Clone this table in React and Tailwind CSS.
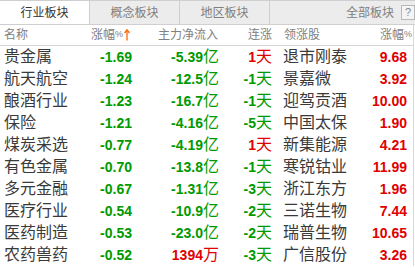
import React from "react";

const rows = [
  ["贵金属", "-1.69", "-5.39", "亿", "g", "1", "r", "退市刚泰", "9.68"],
  ["航天航空", "-1.24", "-12.5", "亿", "g", "-1", "g", "景嘉微", "3.92"],
  ["酿酒行业", "-1.23", "-16.7", "亿", "g", "-1", "g", "迎驾贡酒", "10.00"],
  ["保险", "-1.21", "-4.16", "亿", "g", "-5", "g", "中国太保", "1.90"],
  ["煤炭采选", "-0.77", "-4.19", "亿", "g", "1", "r", "新集能源", "4.21"],
  ["有色金属", "-0.70", "-13.8", "亿", "g", "-1", "g", "寒锐钴业", "11.99"],
  ["多元金融", "-0.67", "-1.31", "亿", "g", "-3", "g", "浙江东方", "1.96"],
  ["医疗行业", "-0.54", "-10.9", "亿", "g", "-2", "g", "三诺生物", "7.44"],
  ["医药制造", "-0.53", "-23.0", "亿", "g", "-2", "g", "瑞普生物", "10.65"],
  ["农药兽药", "-0.52", "1394", "万", "r", "-3", "g", "广信股份", "3.26"],
];

const FONT = { fontFamily: '"Liberation Sans", "Noto Sans CJK SC", sans-serif' };

export default function App() {
  return (
    <div className="w-[415px] h-[268px] bg-white overflow-hidden text-[#333]" style={FONT}>
      {/* Tabs */}
      <div className="flex h-[25px] border-t border-b border-[#cfcfcf] bg-[#ececec] text-[12px]">
        <div className="w-[90px] flex items-center justify-center bg-white text-[#333] border-r border-[#cfcfcf]">行业板块</div>
        <div className="w-[90px] flex items-center justify-center text-[#808080] border-r border-[#cfcfcf]">概念板块</div>
        <div className="w-[90px] flex items-center justify-center text-[#808080] border-r border-[#cfcfcf]">地区板块</div>
        <div className="flex-1 flex items-center justify-end text-[#808080]">
          <span>全部板块</span>
          <span className="ml-[7px] w-[14px] h-[15px] border border-[#b8b8b8] bg-[#f4f4f4] flex items-center justify-center text-[11px] text-[#888] leading-none">?</span>
        </div>
      </div>
      <div className="border-r border-[#d8d8d8] w-[414px]">
        {/* Header */}
        <div className="flex h-[21px] items-center border-b border-[#d6d6d6] text-[12px] text-[#808080]">
          <div className="w-[90px] pl-[4px]">名称</div>
          <div className="w-[42px] flex justify-end items-center pr-[2px]">
            <span>涨幅</span>
            <span className="text-[9px]">%</span>
            <svg width="6" height="12" viewBox="0 0 6 12" className="ml-[1px]">
              <path d="M3 1 L3 11.5" stroke="#ff6600" strokeWidth="1.3" />
              <path d="M0.5 4 L3 0.8 L5.5 4" stroke="#ff6600" strokeWidth="1.3" fill="none" />
            </svg>
          </div>
          <div className="w-[86px] text-right">主力净流入</div>
          <div className="w-[54px] text-right">连涨</div>
          <div className="w-[106px] pl-[12px]">领涨股</div>
          <div className="flex-1 flex justify-end items-center pr-[1px]">
            <span>涨幅</span>
            <span className="text-[9px]">%</span>
          </div>
        </div>
        {/* Rows */}
        {rows.map((r, i) => {
          const c3 = r[4] === "r" ? "text-[#e00000]" : "text-[#009a00]";
          const c4 = r[6] === "r" ? "text-[#e00000]" : "text-[#009a00]";
          return (
            <div key={i} className="flex h-[22px] items-center">
              <div className="w-[90px] pl-[4px] text-[16px] text-[#3a3a3a]">{r[0]}</div>
              <div className="w-[42px] text-right text-[14px] font-bold text-[#009a00]">{r[1]}</div>
              <div className={`w-[87px] text-right ${c3}`}>
                <span className="text-[14px] font-bold">{r[2]}</span>
                <span className="text-[16px]">{r[3]}</span>
              </div>
              <div className={`w-[53px] text-right ${c4}`}>
                <span className="text-[14px] font-bold">{r[5]}</span>
                <span className="text-[16px]">天</span>
              </div>
              <div className="w-[90px] pl-[11px] text-[16px] text-[#3a3a3a]">{r[7]}</div>
              <div className="w-[45px] text-right text-[14px] font-bold text-[#e00000]">{r[8]}</div>
            </div>
          );
        })}
      </div>
    </div>
  );
}
